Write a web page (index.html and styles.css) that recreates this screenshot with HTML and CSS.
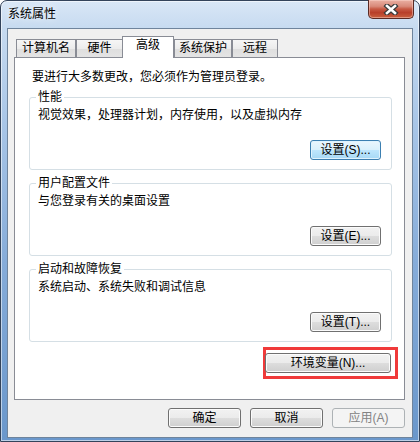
FILE: index.html
```html
<!DOCTYPE html>
<html>
  <head>
    <meta charset="UTF-8">
    <title>系统属性</title>
    <link rel="stylesheet" href="styles.css">
  </head>
  <body>
    <div class="window">
      <div class="titlebar">
        <span class="title">系统属性</span>
        <div class="close">
          <svg width="16" height="11" viewBox="0 0 16 11">
            <path d="M4 2 L12 9 M12 2 L4 9" stroke="#3b3b3b" stroke-width="5" stroke-linecap="square" fill="none"/>
            <path d="M4 2 L12 9 M12 2 L4 9" stroke="#fff" stroke-width="2.6" stroke-linecap="square" fill="none"/>
          </svg>
        </div>
      </div>

      <div class="client">
        <div class="tabs">
          <div class="tab tab-name">计算机名</div>
          <div class="tab tab-hw">硬件</div>
          <div class="tab active">高级</div>
          <div class="tab tab-protect">系统保护</div>
          <div class="tab tab-remote">远程</div>
        </div>

        <div class="panel">
          <p class="notice">要进行大多数更改，您必须作为管理员登录。</p>

          <div class="group">
            <div class="group-title">性能</div>
            <p class="group-desc">视觉效果，处理器计划，内存使用，以及虚拟内存</p>
            <div class="group-actions">
              <button class="btn btn-default">设置(S)...</button>
            </div>
          </div>

          <div class="group">
            <div class="group-title">用户配置文件</div>
            <p class="group-desc">与您登录有关的桌面设置</p>
            <div class="group-actions">
              <button class="btn">设置(E)...</button>
            </div>
          </div>

          <div class="group">
            <div class="group-title">启动和故障恢复</div>
            <p class="group-desc">系统启动、系统失败和调试信息</p>
            <div class="group-actions">
              <button class="btn">设置(T)...</button>
            </div>
          </div>

          <div class="env-row">
            <span class="mark">
              <button class="btn btn-env">环境变量(N)...</button>
            </span>
          </div>
        </div>

        <div class="dialog-buttons">
          <button class="btn btn-dialog">确定</button>
          <button class="btn btn-dialog">取消</button>
          <button class="btn btn-dialog" disabled>应用(A)</button>
        </div>
      </div>
    </div>
  </body>
</html>
```

FILE: styles.css
```css
html, body {
  margin: 0;
  padding: 0;
  background: #fff;
}
body {
  font-family: "Liberation Sans", "Noto Sans CJK SC", sans-serif;
  font-size: 12px;
  line-height: 15px;
  color: #000;
}

.window {
  width: 420px;
  height: 442px;
  box-sizing: border-box;
  border: 1px solid #33435a;
  border-radius: 7px 7px 0 0;
  padding: 0 6px 3px 6px;
  display: flex;
  flex-direction: column;
  background: linear-gradient(to bottom, #d9e7f6 0, #c6daf0 28px, #a9c6e7 120px, #86acd9 260px, #6a97cb 100%);
  box-shadow: inset 0 0 0 1px rgba(255,255,255,0.55);
}

.titlebar {
  height: 27px;
  display: flex;
  align-items: flex-start;
  flex-shrink: 0;
}
.title {
  margin: 6px 0 0 1px;
  text-shadow: 0 0 6px rgba(255,255,255,0.95);
}
.close {
  margin: -1px -1px 0 auto;
  width: 46px;
  height: 19px;
  box-sizing: border-box;
  border: 1px solid #5a2a24;
  border-top: none;
  border-radius: 0 0 5px 5px;
  background: linear-gradient(to bottom, #eab0a3 0, #d98a7a 35%, #c75a44 50%, #b83f2a 70%, #c9603f 100%);
  box-shadow: inset 0 0 0 1px rgba(255,220,210,0.45);
  display: flex;
  align-items: center;
  justify-content: center;
}

.client {
  flex: 1;
  border: 1px solid #6f849c;
  background: #f0f0f0;
  padding: 7px 7px 0 6px;
  display: flex;
  flex-direction: column;
}

.tabs {
  display: flex;
  align-items: flex-end;
  padding-left: 2px;
}
.tab {
  height: 18px;
  box-sizing: border-box;
  border: 1px solid #898c95;
  border-bottom: none;
  padding-top: 1px;
  text-align: center;
  background: linear-gradient(to bottom, #f6f6f6 0, #ececec 50%, #dedede 51%, #e4e4e4 100%);
}
.tab-name { width: 60px; }
.tab-hw { width: 47px; }
.tab-protect { width: 58px; }
.tab-remote { width: 46px; }
.tab.active {
  width: 52px;
  height: 22px;
  margin: 0 0 -1px -1px;
  padding-top: 1px;
  background: #fff;
  position: relative;
  z-index: 1;
}

.panel {
  height: 343px;
  box-sizing: border-box;
  border: 1px solid #898c95;
  background: #fff;
  padding: 12px 12px 0 14px;
}
.notice {
  margin: 0 0 0 3px;
}

.group {
  margin-top: 12px;
  border: 1px solid #d5dfe5;
  border-radius: 3px;
  padding: 0 10px 9px 8px;
}
.group + .group {
  margin-top: 13px;
}
.group-title {
  display: table;
  margin: -8px 0 0 -2px;
  padding: 0 2px;
  background: #fff;
}
.group-desc {
  margin: 3px 0 0 0;
}
.group-actions {
  display: flex;
  justify-content: flex-end;
  margin-top: 17px;
}

.btn {
  height: 20px;
  width: 71px;
  box-sizing: border-box;
  border: 1px solid #707070;
  border-radius: 3px;
  padding: 0;
  font-family: "Liberation Sans", "Noto Sans CJK SC", sans-serif;
  font-size: 12px;
  line-height: 16px;
  color: #000;
  background: linear-gradient(to bottom, #f2f2f2 0, #ebebeb 50%, #dddddd 51%, #cfcfcf 100%);
  box-shadow: inset 0 0 0 1px #fbfbfb;
}
.btn-default {
  border-color: #3c7fb1;
  background: linear-gradient(to bottom, #eaf6fd 0, #d9f0fc 50%, #bee6fd 51%, #a7d9f5 100%);
  box-shadow: inset 0 0 0 1px #dff3fe;
}
.btn[disabled] {
  border-color: #adb2b5;
  background: #f4f4f4;
  color: #838383;
  box-shadow: none;
}

.env-row {
  display: flex;
  justify-content: flex-end;
  margin: 5px -6px 0 0;
}
.mark {
  display: flex;
  border: 3px solid #f03a3a;
  padding: 3px 4px 3px 0;
}
.btn-env {
  width: 126px;
  margin-left: -1px;
}

.dialog-buttons {
  display: flex;
  justify-content: flex-end;
  gap: 9px;
  margin-top: 8px;
}
.btn-dialog {
  width: 73px;
}
```
